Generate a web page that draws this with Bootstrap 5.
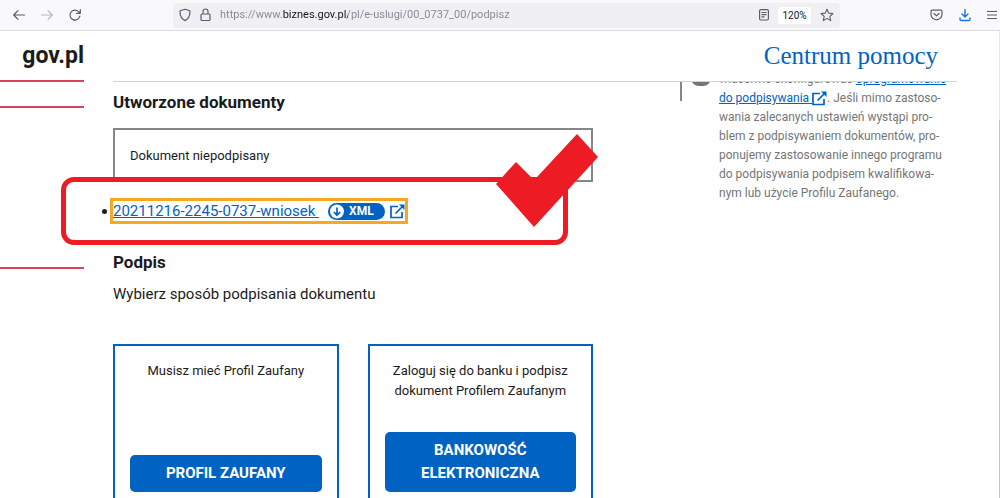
<!DOCTYPE html>
<html lang="pl">
<head>
<meta charset="utf-8">
<meta name="viewport" content="width=device-width, initial-scale=1">
<title>Podpis - biznes.gov.pl</title>
<link href="https://cdn.jsdelivr.net/npm/bootstrap@5.3.0/dist/css/bootstrap.min.css" rel="stylesheet">
<style>
:root { --gov-blue: #0063c2; --mark-red: #ed1c24; --rail-red: #da4359; --rail: 84px; --gutter: 29px; }
body { font-family: Roboto, sans-serif; font-size: 13px; line-height: 20px; color: #1b1b1b; background: #fff; }
a { color: var(--gov-blue); }
svg { display: block; flex: none; }

/* browser toolbar */
.toolbar { height: 31px; background: #f9f9fb; border-bottom: 1px solid #dcdce0; padding: 0 1px 0 12px; color: #5b5b66; }
.toolbar button { border: 0; padding: 0; background: none; color: inherit; }
.toolbar .nav-tools { width: 161px; gap: 14px; }
.urlbar { background: #f0f0f4; border-radius: 4px; height: 25px; padding: 0 6px; gap: 9px; }
.urlbar input { border: 0; outline: 0; padding: 0; height: 20px; font: 11px/20px Roboto, sans-serif;
  background: linear-gradient(90deg, #85858c 62px, #15141a 62px 128px, #85858c 128px); -webkit-background-clip: text; background-clip: text; -webkit-text-fill-color: transparent; }
.toolbar .zoom-level { background: #fff; border-radius: 3px; width: 33px; height: 17px; font: 10px/17px Roboto, sans-serif; color: #15141a; }
.toolbar .end-tools { width: 159px; padding-left: 90px; gap: 12px; }

/* site */
.page-view { padding-right: 43px; column-gap: var(--gutter); }
.site-head { height: 51px; padding-right: 43px; column-gap: var(--gutter); }
.brand { width: var(--rail); font-size: 23px; border-bottom: 2px solid var(--rail-red); color: #1b1b1b; }
.head-line { border-bottom: 1px solid #d3d3d3; padding-right: 19px; }
.help-link { font: 25px/32px "Liberation Serif", serif; }
.rail { width: var(--rail); flex: none; }
.rail-item { border-bottom: 2px solid var(--rail-red); }
.rail-item:first-child { height: 26px; }
.rail-item:last-child { height: 161px; }
.split { display: grid; grid-template-columns: 480fr 277fr; column-gap: 87px; }
h2 { font-size: 17px; line-height: 24px; font-weight: 700; margin: 0; }
.doc-box { border: 2px solid #868686; height: 54px; padding: 2px 15px 0; margin-top: 14px; }
.marked { border: 5px solid var(--mark-red); border-radius: 13px; background: #fff; height: 68px; margin: -5px 25px 5px -52px; padding: 0 0 0 36px; }
.marked .tick-mark { right: -35px; top: -49px; }
.bullet { width: 5px; height: 5px; border-radius: 50%; background: #1b1b1b; margin-right: 5px; }
.file-link { font-size: 15px; line-height: 20px; outline: 3px solid #f7a823; padding: 0; margin-left: 1px; height: 20px; }
.pill { background: var(--gov-blue); color: #fff; width: 57px; height: 17px; border-radius: 9px; font-size: 12px; line-height: 17px; gap: 4px; margin: 0 5px 0 9px; }
.lead-in { font-size: 15px; line-height: 20px; margin: 10px 0 40px; }
.method { border: 2px solid var(--gov-blue); padding: 15px; }
.methods { gap: var(--gutter); }
.btn-gov { background: var(--gov-blue); color: #fff; font-size: 15px; line-height: 23px; padding: 7px 20px; margin-top: 31px; border: 0; border-radius: 5px; font-weight: 700; }
.btn-gov:hover { background: #00509e; color: #fff; }
.aside-note { font-size: 12px; line-height: 19px; color: #767676; margin-top: -12px; column-gap: 8px; padding-right: 7px; }
.aside-edge { border-left: 2px solid #868686; height: 31px; width: 31px; padding-left: 9px; flex: none; }
.aside-dot { width: 20px; height: 16px; border-radius: 10px; background: #767676; }
.scroll-hint { width: 1px; right: 0; top: 31px; bottom: 0; background: linear-gradient(#e8e8e8 89px, #c4c4c4 89px); }
</style>
</head>
<body class="vh-100 d-flex flex-column overflow-hidden position-relative">

<div class="toolbar d-flex align-items-center flex-shrink-0">
  <div class="nav-tools d-flex align-items-center">
    <button type="button" aria-label="Wstecz"><svg width="14" height="14" viewBox="0 0 14 14" fill="none" stroke="currentColor" stroke-width="1.2" stroke-linecap="round" stroke-linejoin="round"><path d="M12.5 7H1.7M6 2.7 1.7 7 6 11.3"/></svg></button>
    <button type="button" aria-label="Dalej" disabled><svg width="14" height="14" viewBox="0 0 14 14" fill="none" stroke="#b8b8bf" stroke-width="1.2" stroke-linecap="round" stroke-linejoin="round"><path d="M1.5 7h10.8M8 2.7 12.3 7 8 11.3"/></svg></button>
    <button type="button" aria-label="Odśwież"><svg width="14" height="14" viewBox="0 0 14 14" fill="none" stroke="currentColor" stroke-width="1.2" stroke-linecap="round" stroke-linejoin="round"><path d="M11.900 8.200A5 5 0 1 1 10.600 3.600L12 5M12.300 1.600v3.700H8.600"/></svg></button>
  </div>
  <div class="urlbar d-flex align-items-center flex-grow-1">
    <svg width="12" height="14" viewBox="0 0 12 14" fill="none" stroke="currentColor" stroke-width="1.2" stroke-linejoin="round"><path d="M6 1.200 10.800 2.800c.5 3.800-.6 7.600-4.800 9.800C1.800 10.400.7 6.600 1.200 2.800Z"/></svg>
    <svg width="11" height="14" viewBox="0 0 11 14" fill="none" stroke="currentColor" stroke-width="1.2"><rect x="1" y="6" width="9" height="6.500" rx="1"/><path d="M3 6V3.500a2.500 2.500 0 0 1 5 0V6"/></svg>
    <input class="flex-grow-1" type="text" aria-label="Adres strony" value="https://www.biznes.gov.pl/pl/e-uslugi/00_0737_00/podpisz">
    <button type="button" aria-label="Tryb czytania"><svg width="10" height="12" viewBox="0 0 10 12" fill="none" stroke="currentColor" stroke-width="1.2"><rect x=".6" y=".6" width="8.800" height="10.400" rx="1.200"/><path d="M2.500 3.500h5M2.500 5.700h5M2.500 7.900h3"/></svg></button>
    <button type="button" class="zoom-level text-center">120%</button>
    <button type="button" aria-label="Dodaj zakładkę"><svg width="14" height="14" viewBox="0 0 14 14" fill="none" stroke="currentColor" stroke-width="1.1" stroke-linejoin="round"><path d="m7 1.200 1.700 3.900 4.300.4-3.200 2.900.9 4.200L7 10.400l-3.700 2.200.9-4.200L1 5.500l4.300-.4Z"/></svg></button>
  </div>
  <div class="end-tools d-flex align-items-center">
    <button type="button" aria-label="Pocket"><svg width="13" height="12" viewBox="0 0 13 12" fill="none" stroke="currentColor" stroke-width="1.2" stroke-linecap="round" stroke-linejoin="round"><path d="M2 1.200h9a1 1 0 0 1 1 1V5.300a5.500 5.500 0 0 1-11 0V2.200a1 1 0 0 1 1-1ZM4 4.500l2.500 2.400L9 4.500"/></svg></button>
    <button type="button" class="ms-1" aria-label="Pobrane pliki"><svg width="12" height="14" viewBox="0 0 12 14" fill="none" stroke="#1a73e0" stroke-width="1.4" stroke-linecap="round" stroke-linejoin="round"><path d="M6 1.500v7.200M3 6l3 2.900L9 6M1 10v1.300a1.200 1.200 0 0 0 1.200 1.200h7.600A1.200 1.200 0 0 0 11 11.300V10"/></svg></button>
    <button type="button" class="ms-1" aria-label="Menu"><svg width="10" height="10" viewBox="0 0 10 10" stroke="currentColor" stroke-width="1.2"><path d="M0 1.500h10M0 5h10M0 8.500h10"/></svg></button>
  </div>
</div>

<header class="site-head d-flex flex-shrink-0">
  <a class="brand d-flex align-items-center justify-content-end fw-bold text-decoration-none" href="#">gov.pl</a>
  <div class="head-line flex-grow-1 d-flex align-items-center justify-content-end">
    <a class="help-link text-decoration-none" href="#">Centrum pomocy</a>
  </div>
</header>

<div class="page-view d-flex flex-grow-1 overflow-hidden">
  <div class="rail">
    <div class="rail-item"></div>
    <div class="rail-item"></div>
  </div>
  <div class="split flex-grow-1">
    <main class="pt-2">
      <h2>Utworzone dokumenty</h2>
      <div class="doc-box d-flex align-items-center">Dokument niepodpisany</div>
      <div class="marked position-relative d-flex align-items-center">
        <span class="bullet"></span>
        <a class="file-link d-flex align-items-center" href="#"><span>20211216-2245-0737-wniosek&nbsp;</span>
          <span class="pill d-flex align-items-center fw-bold"><svg width="17" height="17" viewBox="0 0 17 17"><circle cx="9" cy="8.500" r="7" fill="#fff"/><path d="M9 4.500v7.500M5.800 9 9 12.200 12.200 9" fill="none" stroke="#0063c2" stroke-width="1.7"/></svg>XML</span>
          <svg width="15" height="15" viewBox="0 0 15 15" fill="none" stroke="#0063c2" stroke-width="1.7"><path d="M8 2.500H1v11h11V8M5.500 9.500l7-7"/><path d="M9 .5h5.500V6Z" fill="#0063c2" stroke="none"/></svg>
        </a>
        <svg class="tick-mark position-absolute" width="102" height="94" viewBox="0 0 102 94" aria-hidden="true"><path d="M81 1 102 24 38 94 0 51 20 29 35 44H41Z" fill="#ed1c24"/></svg>
      </div>
      <h2>Podpis</h2>
      <p class="lead-in">Wybierz sposób podpisania dokumentu</p>
      <div class="methods d-flex">
        <div class="method flex-fill w-50 d-flex flex-column text-center">
          <p class="m-0">Musisz mieć Profil Zaufany</p>
          <button type="button" class="btn btn-gov mt-auto">PROFIL ZAUFANY</button>
        </div>
        <div class="method flex-fill w-50 d-flex flex-column text-center">
          <p class="m-0">Zaloguj się do banku i podpisz dokument Profilem Zaufanym</p>
          <button type="button" class="btn btn-gov">BANKOWOŚĆ ELEKTRONICZNA</button>
        </div>
      </div>
    </main>
    <aside>
      <div class="aside-note d-flex">
        <div class="aside-edge"><div class="aside-dot"></div></div>
        <p class="m-0">właściwie skonfigurować <a href="#">oprogramowanie do podpisywania <svg class="d-inline-block align-middle" width="15" height="15" viewBox="0 0 15 15" fill="none" stroke="#0063c2" stroke-width="1.7"><path d="M8 2.500H1v11h11V8M5.500 9.500l7-7"/><path d="M9 .5h5.500V6Z" fill="#0063c2" stroke="none"/></svg></a>. Jeśli mimo zastoso&shy;wania zalecanych ustawień wystąpi pro&shy;blem z podpisywaniem dokumentów, pro&shy;ponujemy zastosowanie innego programu do podpisywania podpisem kwalifikowa&shy;nym lub użycie Profilu Zaufanego.</p>
      </div>
    </aside>
  </div>
</div>
<div class="scroll-hint position-absolute"></div>
<script src="https://cdn.jsdelivr.net/npm/bootstrap@5.3.0/dist/js/bootstrap.bundle.min.js"></script>
</body>
</html>
